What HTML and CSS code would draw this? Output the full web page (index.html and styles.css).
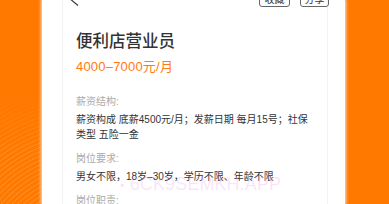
FILE: index.html
```html
<!DOCTYPE html>
<html lang="zh-CN">
<head>
<meta charset="utf-8">
<link rel="stylesheet" href="styles.css">
</head>
<body>
<div class="card">
  <div class="panel">
    <div class="header">
      <svg class="back" width="12" height="20" viewBox="0 0 12 20"><polyline points="10,2 1,11 10,18.5" fill="none" stroke="#333" stroke-width="1.1"/></svg>
      <div class="actions">
        <span class="btn btn-fav">收藏</span>
        <span class="btn btn-share">分享</span>
      </div>
    </div>
    <h1 class="title">便利店营业员</h1>
    <div class="salary">4000–7000元/月</div>
    <div class="section first">
      <div class="label">薪资结构:</div>
      <div class="text">薪资构成 底薪4500元/月；发薪日期 每月15号；社保类型 五险一金</div>
    </div>
    <div class="section">
      <div class="label">岗位要求:</div>
      <div class="text">男女不限，18岁–30岁，学历不限、年龄不限</div>
    </div>
    <div class="section">
      <div class="label">岗位职责:</div>
    </div>
    <div class="watermark"><span class="dot">•</span> 6CK9SEMKH.APP</div>
  </div>
</div>
</body>
</html>
```
FILE: styles.css
```css
html, body {
  margin: 0;
  padding: 0;
}
body {
  width: 389px;
  height: 204px;
  overflow: hidden;
  background-color: #ff7800;
  background-image:
    linear-gradient(to bottom, #ff7800 0px, rgba(255,120,0,0) 60px),
    repeating-radial-gradient(circle at 95px 190px, rgba(255,190,110,0) 0px, rgba(255,190,110,0) 2.6px, rgba(255,185,100,.45) 3.2px, rgba(255,190,110,0) 4px);
  background-size: 41px 110px, 41px 110px;
  background-position: 0 94px, 0 94px;
  background-repeat: no-repeat;
  font-family: "Liberation Sans", "Noto Sans CJK SC", sans-serif;
  display: flex;
}
.card {
  margin-left: 42px;
  width: 303px;
  height: 204px;
  background: #fff;
  box-shadow: 0 0 3px 1px rgba(255,245,235,.85);
  display: flex;
}
.panel {
  position: relative;
  margin-left: 20px;
  border-left: 1px solid #f3f3f3;
  border-right: 1px solid #f3f3f3;
  padding: 0 13px;
  box-sizing: content-box;
  width: 238px;
}
.header {
  margin: -13px -15px 0 -8px;
  height: 20px;
  display: flex;
  justify-content: space-between;
  align-items: flex-end;
}
.back {
  display: block;
}
.actions {
  display: flex;
  gap: 10px;
}
.btn {
  display: flex;
  align-items: center;
  justify-content: center;
  height: 18px;
  box-sizing: border-box;
  border: 1px solid #666;
  border-radius: 3px;
  font-size: 10px;
  color: #333;
}
.btn-fav { width: 31px; }
.btn-share { width: 29px; }
.title {
  margin: 22px 0 0;
  font-size: 16.5px;
  line-height: 24px;
  font-weight: 500;
  color: #333;
}
.salary {
  margin-top: 5px;
  font-size: 13px;
  line-height: 18px;
  color: #ff7a14;
  letter-spacing: 0.2px;
}
.section {
  margin-top: 10px;
}
.section.first {
  margin-top: 19px;
}
.label {
  font-size: 10px;
  line-height: 14px;
  color: #aaa;
}
.text {
  margin-top: 3px;
  font-size: 10px;
  line-height: 15px;
  color: #333;
}
.watermark {
  position: absolute;
  left: 57px;
  top: 174px;
  font-size: 18px;
  line-height: 20px;
  color: rgba(235,160,230,.28);
  white-space: nowrap;
  letter-spacing: 0.1px;
}
.dot {
  font-size: 13px;
}
```
